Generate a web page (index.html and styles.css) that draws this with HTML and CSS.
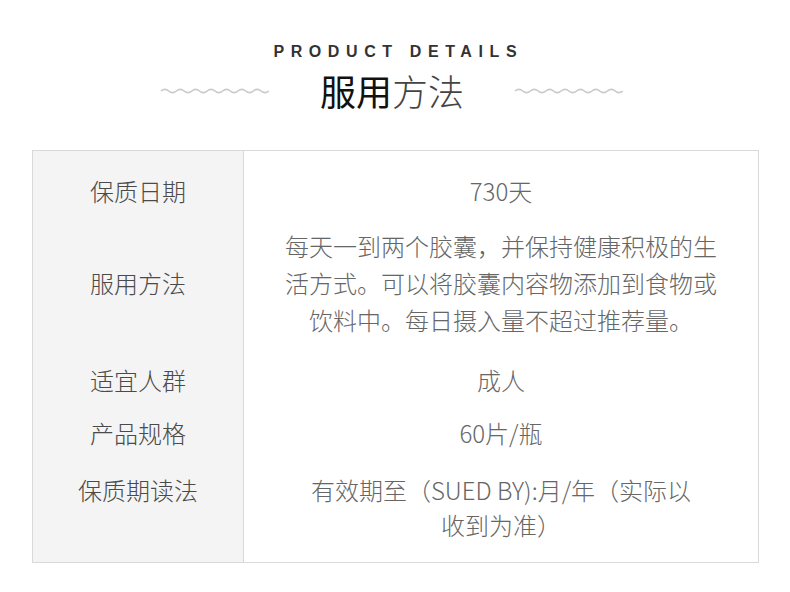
FILE: index.html
```html
<!DOCTYPE html>
<html lang="zh-CN">
<head>
<meta charset="utf-8">
<title>服用方法</title>
<link rel="stylesheet" href="styles.css">
</head>
<body>
<div class="page">
  <header class="head">
    <div class="eyebrow">PRODUCT DETAILS</div>
    <div class="title-row">
      <svg class="wave" width="110" height="8" viewBox="0 0 110 8"><path d="M1 4 Q4.85 0.6 8.7 4 T16.4 4 T24.1 4 T31.8 4 T39.5 4 T47.2 4 T54.9 4 T62.6 4 T70.3 4 T78 4 T85.7 4 T93.4 4 T101.1 4 T108.8 4" fill="none" stroke="#c9c9c9" stroke-width="1.6"/></svg>
      <h1 class="title"><span class="title-strong">服用</span><span class="title-light">方法</span></h1>
      <svg class="wave" width="110" height="8" viewBox="0 0 110 8"><path d="M1 4 Q4.85 0.6 8.7 4 T16.4 4 T24.1 4 T31.8 4 T39.5 4 T47.2 4 T54.9 4 T62.6 4 T70.3 4 T78 4 T85.7 4 T93.4 4 T101.1 4 T108.8 4" fill="none" stroke="#c9c9c9" stroke-width="1.6"/></svg>
    </div>
  </header>

  <div class="spec">
    <div class="cell label r1">保质日期</div>
    <div class="cell value r1">730天</div>

    <div class="cell label r2">服用方法</div>
    <div class="cell value r2">每天一到两个胶囊，并保持健康积极的生<br>活方式。可以将胶囊内容物添加到食物或<br>饮料中。每日摄入量不超过推荐量。</div>

    <div class="cell label r3">适宜人群</div>
    <div class="cell value r3">成人</div>

    <div class="cell label r4">产品规格</div>
    <div class="cell value r4">60片/瓶</div>

    <div class="cell label r5 top">保质期读法</div>
    <div class="cell value r5">有效期至（SUED BY):月/年（实际以<br>收到为准）</div>
  </div>
</div>
</body>
</html>
```

FILE: styles.css
```css
html, body {
  margin: 0;
  padding: 0;
  background: #ffffff;
}

body {
  font-family: "Noto Sans CJK SC", "Noto Sans", sans-serif;
  color: #555555;
}

.page {
  width: 790px;
  height: 592px;
  padding-top: 42px;
  box-sizing: border-box;
}

.head {
  display: flex;
  flex-direction: column;
  align-items: center;
}

.eyebrow {
  font-family: "Liberation Sans", Arial, sans-serif;
  font-weight: bold;
  font-size: 16px;
  line-height: 20px;
  letter-spacing: 6.6px;
  padding-left: 6.6px;
  color: #333333;
}

.title-row {
  display: flex;
  align-items: center;
  gap: 50px;
  margin-top: 6px;
  margin-left: -6px;
}

.wave {
  display: block;
  margin-top: 2px;
}

.title {
  margin: 0;
  font-size: 36px;
  line-height: 44px;
  font-weight: normal;
  letter-spacing: 0;
  white-space: nowrap;
}

.title-strong {
  color: #111111;
  font-weight: 400;
}

.title-light {
  color: #444444;
  font-weight: 300;
}

.spec {
  margin: 38px 0 0 32px;
  width: 727px;
  box-sizing: border-box;
  border: 1px solid #d9d9d9;
  display: grid;
  grid-template-columns: 211px 1fr;
}

.cell {
  font-size: 24px;
  line-height: 37px;
  font-weight: 300;
  text-align: center;
  display: flex;
  align-items: center;
  justify-content: center;
}

.label {
  background: #f4f4f4;
  border-right: 1px solid #d9d9d9;
  color: #4a4a4a;
}

.label.top {
  align-items: flex-start;
}

.value {
  color: #666666;
}

.r1 { padding: 21px 0 10px; }
.r2 { padding: 8px 0 16px; }
.r3 { padding: 7px 0 7px; }
.r4 { padding: 9px 0 12px; }
.r5 { padding: 9px 0 20px; line-height: 35px; }
```
